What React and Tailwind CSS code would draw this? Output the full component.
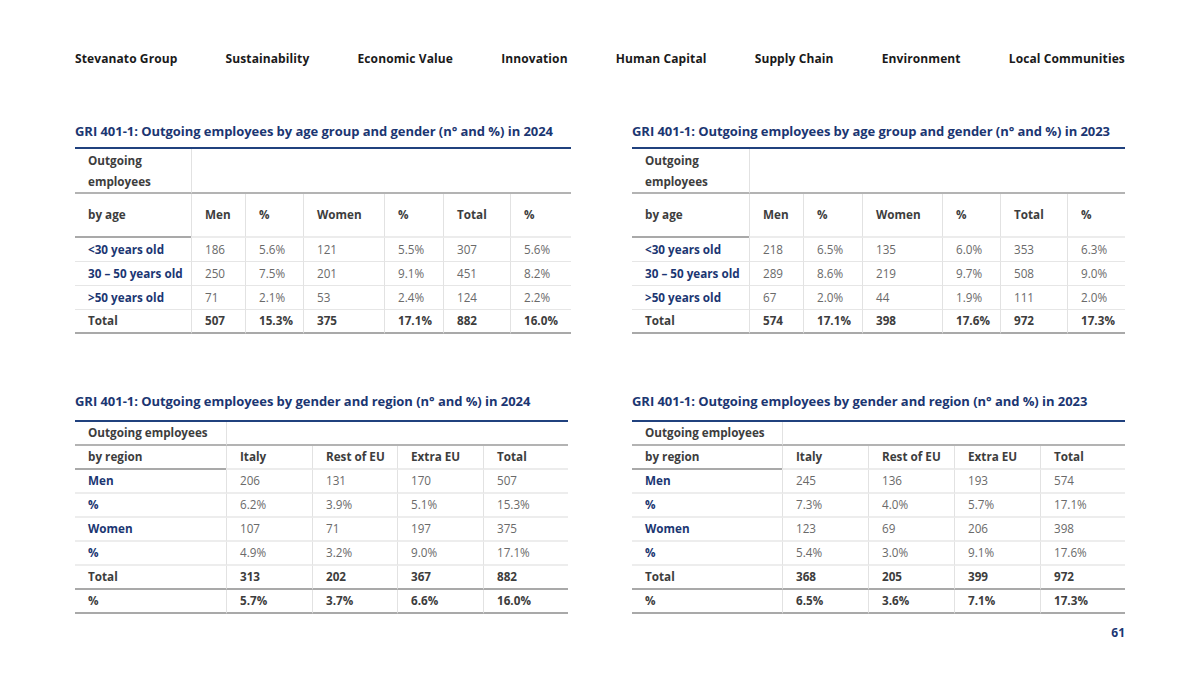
import React from "react";

const NAV = ["Stevanato Group","Sustainability","Economic Value","Innovation","Human Capital","Supply Chain","Environment","Local Communities"];

const DARK = "border-[#a9a9a9]";
const LIGHT = "border-[#e6e6e6]";

function Cell({ children, cls = "", bottom = LIGHT, left = true, bw = "border-b" }) {
  return (
    <div className={`${bw} ${bottom} ${left ? "border-l border-l-[#e2e2e2]" : ""} pl-[13px] flex items-center ${cls}`}>
      {children}
    </div>
  );
}

function AgeTable({ title, cols, rows, total }) {
  return (
    <div className="flex flex-col">
      <div className="text-[13px] font-bold text-[#1b3672] h-[26px] flex items-center tracking-[-0.05px]">{title}</div>
      <div className="border-t-2 border-[#20417e] mt-[2px] text-[11.7px]">
        <div className="grid" style={{ gridTemplateColumns: cols }}>
          <div className="border-b-2 border-[#b3b3b3] pl-[13px] h-[45px] flex flex-col justify-center text-[#3d3d3d] font-bold leading-[21px]">
            <span>Outgoing</span><span>employees</span>
          </div>
          <div className="border-b-2 border-[#b3b3b3] border-l border-l-[#e2e2e2] col-span-6"></div>
          {["by age","Men","%","Women","%","Total","%"].map((h, i) => (
            <Cell key={i} left={i > 0} bottom={i === 0 ? DARK : "border-[#ececec]"} bw="border-b-2" cls="h-[44px] font-bold text-[#3d3d3d]">{h}</Cell>
          ))}
          {rows.map((r, ri) => r.map((v, i) => (
            <Cell key={ri + "-" + i} left={i > 0} cls={`h-[24px] ${i === 0 ? "font-bold text-[#1b3672]" : "text-[#6a6a6a]"}`}>{v}</Cell>
          )))}
          {total.map((v, i) => (
            <Cell key={"t" + i} left={i > 0} bottom={DARK} bw="border-b-2" cls="h-[24px] font-bold text-[#3d3d3d]">{v}</Cell>
          ))}
        </div>
      </div>
    </div>
  );
}

function RegionTable({ title, cols, rows, total, pct }) {
  return (
    <div className="flex flex-col">
      <div className="text-[13px] font-bold text-[#1b3672] h-[26px] flex items-center tracking-[-0.05px]">{title}</div>
      <div className="border-t-2 border-[#20417e] mt-[5px] text-[11.7px]">
        <div className="grid" style={{ gridTemplateColumns: cols }}>
          <div className="border-b-2 border-[#b3b3b3] pl-[13px] h-[24px] flex items-center text-[#3d3d3d] font-bold">Outgoing employees</div>
          <div className="border-b-2 border-[#b3b3b3] border-l border-l-[#e2e2e2] col-span-4"></div>
          {["by region","Italy","Rest of EU","Extra EU","Total"].map((h, i) => (
            <Cell key={i} left={i > 0} bottom={i === 0 ? DARK : "border-[#ececec]"} bw="border-b-2" cls="h-[24px] font-bold text-[#3d3d3d]">{h}</Cell>
          ))}
          {rows.map((r, ri) => r.map((v, i) => (
            <Cell key={ri + "-" + i} left={i > 0} bw="border-b-2" bottom="border-[#ededed]" cls={`h-[24px] ${i === 0 ? "font-bold text-[#1b3672]" : "text-[#6a6a6a]"}`}>{v}</Cell>
          )))}
          {total.map((v, i) => (
            <Cell key={"t" + i} left={i > 0} bottom={DARK} bw="border-b-2" cls="h-[24px] font-bold text-[#3d3d3d]">{v}</Cell>
          ))}
          {pct.map((v, i) => (
            <Cell key={"p" + i} left={i > 0} bottom={DARK} bw="border-b-2" cls="h-[24px] font-bold text-[#3d3d3d]">{v}</Cell>
          ))}
        </div>
      </div>
    </div>
  );
}

export default function App() {
  return (
    <div className="w-[1200px] h-[675px] bg-white overflow-hidden text-[12px]" style={{ fontFamily: '"Open Sans", "Noto Sans", sans-serif' }}>
      <div className="px-[75px] pt-[50px] flex justify-between text-[12px] font-bold text-[#1a1a1a] tracking-[0.1px] leading-[18px]">
        {NAV.map((n) => <span key={n}>{n}</span>)}
      </div>
      <div className="px-[75px] mt-[51px] grid grid-cols-[496px_493px] justify-between">
        <AgeTable
          title="GRI 401-1: Outgoing employees by age group and gender (n° and %) in 2024"
          cols="116px 54px 58px 81px 59px 67px 61px"
          rows={[
            ["<30 years old","186","5.6%","121","5.5%","307","5.6%"],
            ["30 – 50 years old","250","7.5%","201","9.1%","451","8.2%"],
            [">50 years old","71","2.1%","53","2.4%","124","2.2%"],
          ]}
          total={["Total","507","15.3%","375","17.1%","882","16.0%"]}
        />
        <AgeTable
          title="GRI 401-1: Outgoing employees by age group and gender (n° and %) in 2023"
          cols="117px 54px 59px 80px 58px 67px 58px"
          rows={[
            ["<30 years old","218","6.5%","135","6.0%","353","6.3%"],
            ["30 – 50 years old","289","8.6%","219","9.7%","508","9.0%"],
            [">50 years old","67","2.0%","44","1.9%","111","2.0%"],
          ]}
          total={["Total","574","17.1%","398","17.6%","972","17.3%"]}
        />
      </div>
      <div className="px-[75px] mt-[55px] grid grid-cols-[493px_493px] justify-between">
        <RegionTable
          title="GRI 401-1: Outgoing employees by gender and region (n° and %) in 2024"
          cols="151px 86px 85px 86px 85px"
          rows={[
            ["Men","206","131","170","507"],
            ["%","6.2%","3.9%","5.1%","15.3%"],
            ["Women","107","71","197","375"],
            ["%","4.9%","3.2%","9.0%","17.1%"],
          ]}
          total={["Total","313","202","367","882"]}
          pct={["%","5.7%","3.7%","6.6%","16.0%"]}
        />
        <RegionTable
          title="GRI 401-1: Outgoing employees by gender and region (n° and %) in 2023"
          cols="150px 86px 86px 86px 85px"
          rows={[
            ["Men","245","136","193","574"],
            ["%","7.3%","4.0%","5.7%","17.1%"],
            ["Women","123","69","206","398"],
            ["%","5.4%","3.0%","9.1%","17.6%"],
          ]}
          total={["Total","368","205","399","972"]}
          pct={["%","6.5%","3.6%","7.1%","17.3%"]}
        />
      </div>
      <div className="px-[75px] mt-[10px] flex justify-end text-[12px] font-bold text-[#1b3672]">61</div>
    </div>
  );
}
